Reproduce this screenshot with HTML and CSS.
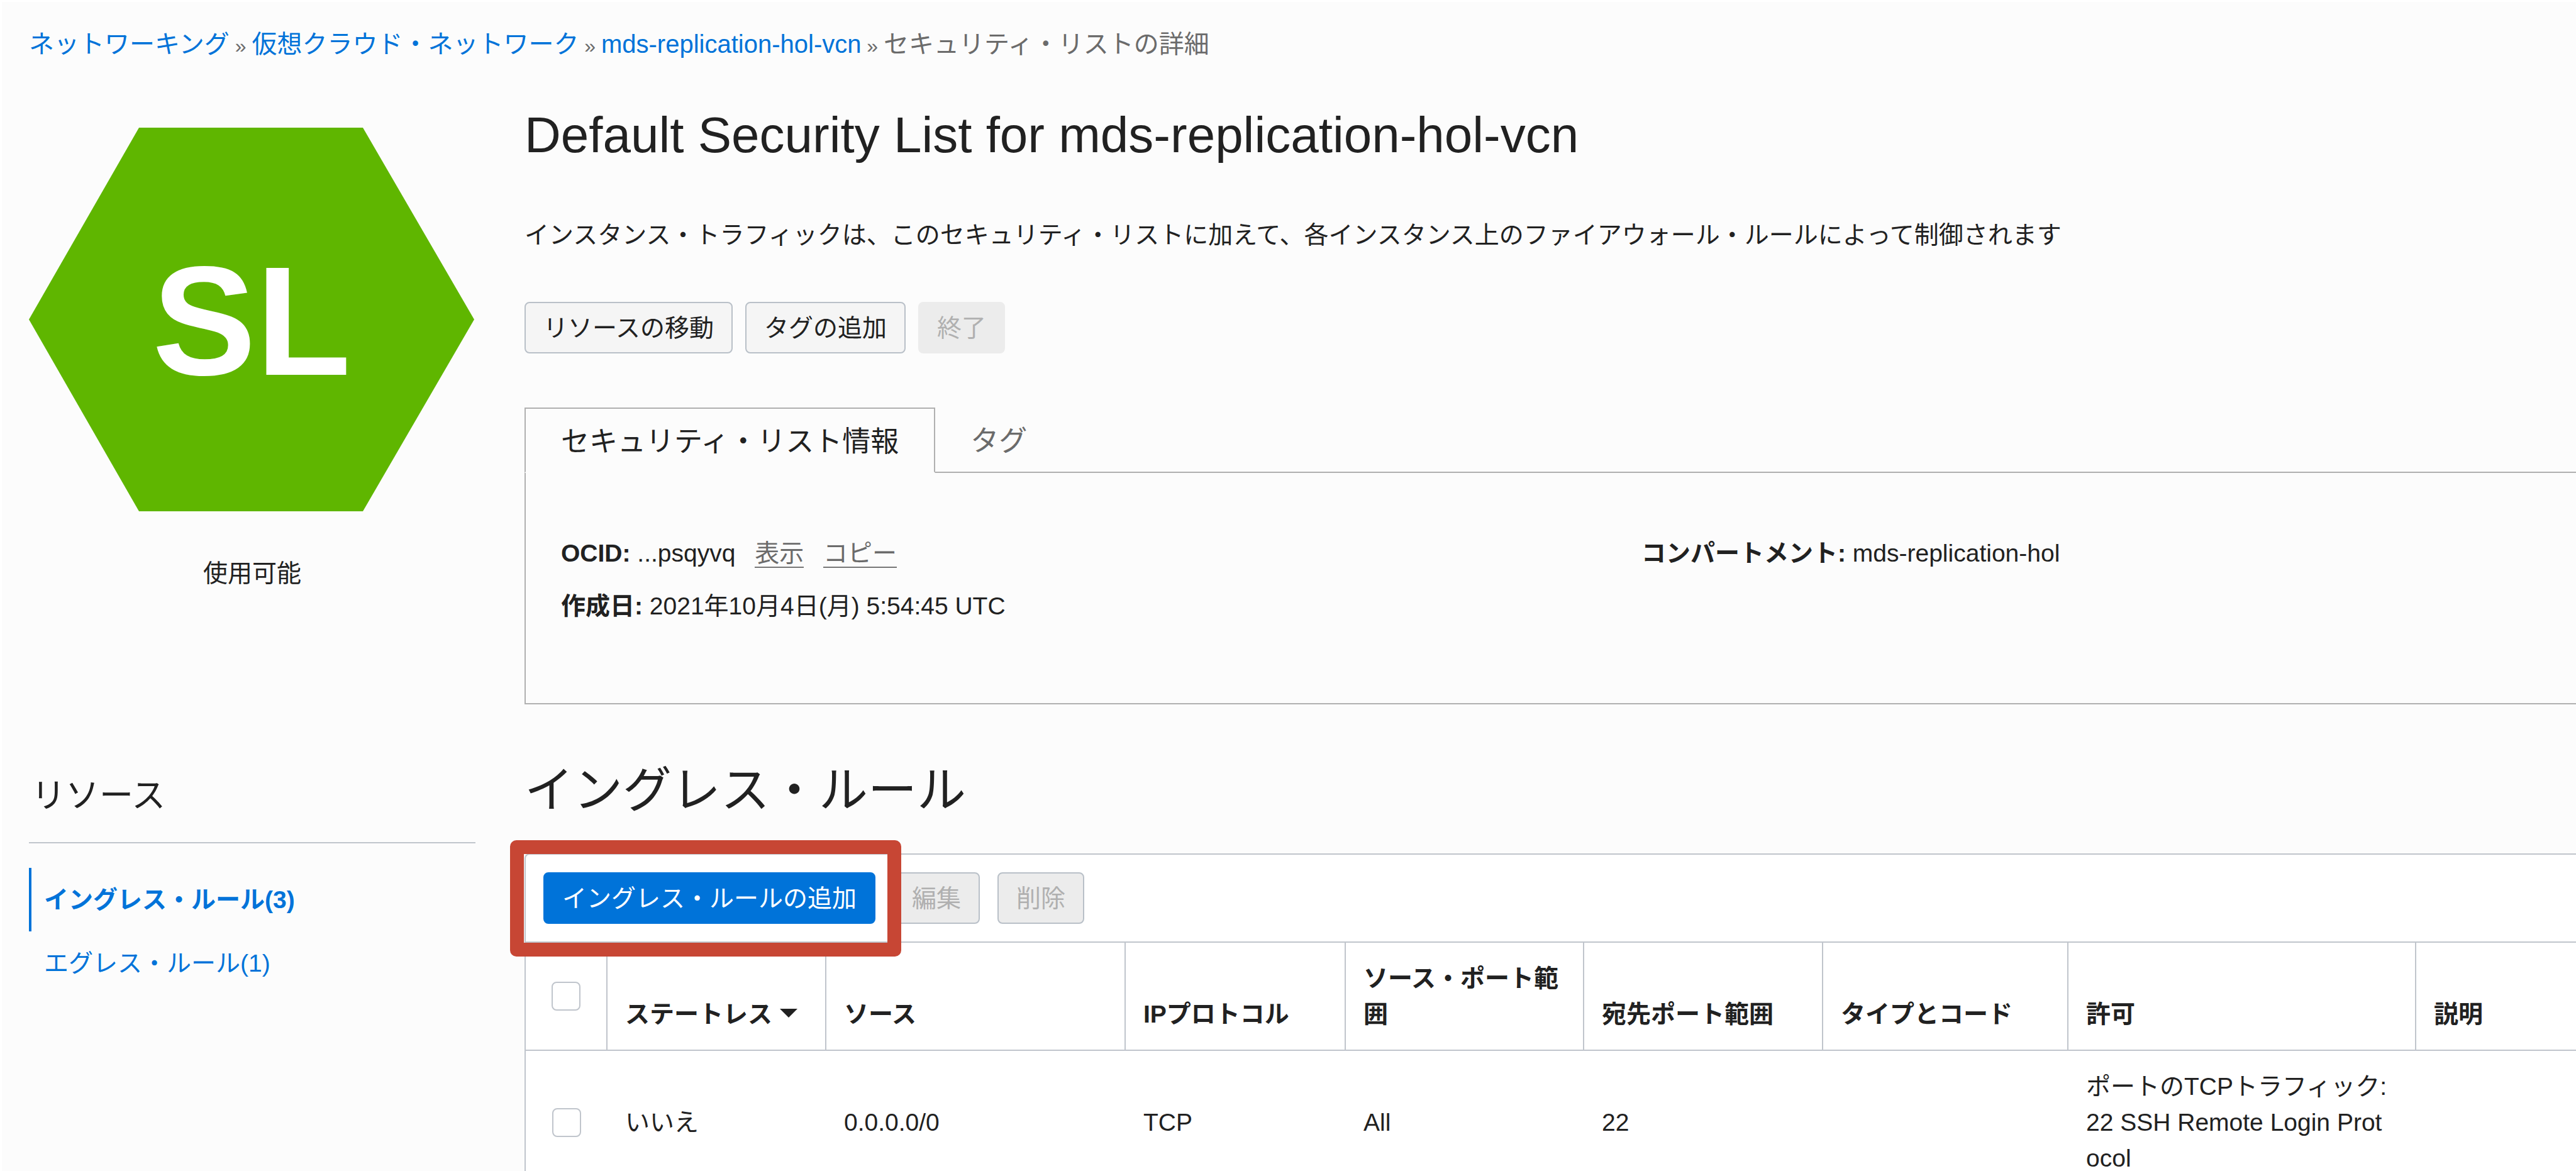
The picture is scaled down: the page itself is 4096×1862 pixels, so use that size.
FILE: index.html
```html
<!DOCTYPE html>
<html lang="ja">
<head>
<meta charset="utf-8">
<title>セキュリティ・リストの詳細</title>
<link rel="stylesheet" href="styles.css">
</head>
<body>
<nav class="breadcrumb" aria-label="パンくずリスト">
  <a href="#">ネットワーキング</a><span class="sep"> » </span><a href="#">仮想クラウド・ネットワーク</a><span class="sep"> » </span><a href="#">mds-replication-hol-vcn</a><span class="sep"> » </span><span>セキュリティ・リストの詳細</span>
</nav>
<div class="layout">
  <aside class="side">
    <div class="status">
      <svg class="hexagon" viewBox="0 0 708 610" role="img" aria-label="SL">
        <polygon points="175,0 531,0 708,305 531,610 175,610 0,305" fill="#5fb600"/>
        <text x="354" y="393" text-anchor="middle" class="hexagon-text">SL</text>
      </svg>
      <p class="status-label">使用可能</p>
    </div>
    <h2 class="side-title">リソース</h2>
    <ul class="side-nav">
      <li><a class="side-link side-link-active" href="#">イングレス・ルール(3)</a></li>
      <li><a class="side-link" href="#">エグレス・ルール(1)</a></li>
    </ul>
  </aside>
  <main class="main">
    <h1 class="title">Default Security List for mds-replication-hol-vcn</h1>
    <p class="description">インスタンス・トラフィックは、このセキュリティ・リストに加えて、各インスタンス上のファイアウォール・ルールによって制御されます</p>
    <div class="actions">
      <button class="btn" type="button">リソースの移動</button>
      <button class="btn" type="button">タグの追加</button>
      <button class="btn btn-flat" type="button" disabled>終了</button>
    </div>
    <div class="tabs" role="tablist">
      <button class="tab tab-active" type="button" role="tab" aria-selected="true">セキュリティ・リスト情報</button>
      <button class="tab" type="button" role="tab" aria-selected="false">タグ</button>
      <div class="tabs-rest"></div>
    </div>
    <section class="info">
      <div class="info-col">
        <p><strong>OCID:</strong> ...psqyvq <a class="copy" href="#">表示</a> <a class="copy" href="#">コピー</a></p>
        <p><strong>作成日:</strong> 2021年10月4日(月) 5:54:45 UTC</p>
      </div>
      <div class="info-col">
        <p><strong>コンパートメント:</strong> mds-replication-hol</p>
      </div>
    </section>
    <h2 class="section-title">イングレス・ルール</h2>
    <section class="panel">
      <div class="toolbar">
        <button class="btn btn-primary" type="button">イングレス・ルールの追加</button>
        <button class="btn" type="button" disabled>編集</button>
        <button class="btn" type="button" disabled>削除</button>
        <div class="highlight"></div>
      </div>
      <table class="rules">
        <colgroup>
          <col class="c-check"><col class="c-stateless"><col class="c-source"><col class="c-proto"><col class="c-sport"><col class="c-dport"><col class="c-type"><col class="c-allow"><col>
        </colgroup>
        <thead>
          <tr>
            <th class="check"><input type="checkbox" aria-label="すべて選択"></th>
            <th>ステートレス<svg class="sort" viewBox="0 0 28 14" aria-hidden="true"><polygon points="0,0 28,0 14,14" fill="#212121"/></svg></th>
            <th>ソース</th>
            <th>IPプロトコル</th>
            <th>ソース・ポート範囲</th>
            <th>宛先ポート範囲</th>
            <th>タイプとコード</th>
            <th>許可</th>
            <th>説明</th>
          </tr>
        </thead>
        <tbody>
          <tr>
            <td class="check"><input type="checkbox" aria-label="ルールを選択"></td>
            <td>いいえ</td>
            <td>0.0.0.0/0</td>
            <td>TCP</td>
            <td>All</td>
            <td>22</td>
            <td></td>
            <td>ポートのTCPトラフィック: 22 SSH Remote Login Protocol</td>
            <td></td>
          </tr>
        </tbody>
      </table>
    </section>
  </main>
</div>
</body>
</html>
```

FILE: styles.css
```css
* {
  box-sizing: border-box;
}

html {
  overflow: hidden;
  background: #fcfcfc;
}

body {
  margin: 0;
  border: solid #ffffff;
  border-width: 3px 0 0 3px;
  background: #fcfcfc;
  color: #212121;
  font-family: "Liberation Sans", "Noto Sans CJK JP", sans-serif;
  font-size: 39px;
  line-height: 57px;
}

h1,
h2,
p,
ul {
  margin: 0;
  padding: 0;
  font-weight: 400;
}

ul {
  list-style: none;
}

a {
  color: #0073d9;
  text-decoration: none;
}

button {
  font: inherit;
  color: inherit;
}

.breadcrumb {
  padding: 39px 43px 0;
  color: #6b6b6b;
  font-size: 40px;
}

.sep {
  font-size: 32px;
}

.layout {
  display: flex;
  align-items: flex-start;
  gap: 78px;
  padding-left: 43px;
}

.side {
  flex: 0 0 710px;
  padding-top: 101px;
}

.status {
  height: 1024px;
}

.hexagon {
  display: block;
  width: 708px;
  height: 610px;
}

.hexagon-text {
  fill: #ffffff;
  font-size: 247px;
  font-weight: 700;
}

.status-label {
  padding-top: 70px;
  text-align: center;
}

.side-title {
  padding: 0 0 36px 4px;
  border-bottom: 2px solid #c0c5cc;
  font-size: 54px;
  line-height: 76px;
}

.side-nav {
  padding-top: 39px;
}

.side-link {
  display: block;
  padding: 22px 20px;
  border-left: 4px solid transparent;
}

.side-link-active {
  border-left-color: #0073d9;
  font-weight: 700;
}

.main {
  flex: 1;
  min-width: 0;
  padding-top: 67px;
}

.title {
  font-size: 80px;
  line-height: 92px;
}

.description {
  padding-top: 84px;
}

.actions {
  display: flex;
  gap: 20px;
  padding-top: 78px;
}

.btn {
  height: 82px;
  padding: 0 28px;
  border: 2px solid #b9c0c8;
  border-radius: 8px;
  background: #f5f5f5;
  white-space: nowrap;
}

.btn:disabled {
  background: #ececec;
  color: #b0b0b0;
}

.btn-flat:disabled {
  border-color: #ececec;
}

.btn-primary {
  border-color: #0073d9;
  background: #0073d9;
  color: #ffffff;
}

.tabs {
  display: flex;
  padding-top: 86px;
}

.tab {
  height: 104px;
  padding: 4px 56px 0;
  border: 0;
  border-bottom: 2px solid #b0b0b0;
  background: none;
  color: #6b6b6b;
  font-size: 45px;
}

.tab-active {
  border: 2px solid #b0b0b0;
  border-bottom-color: transparent;
  color: #212121;
}

.tabs-rest {
  flex: 1;
  border-bottom: 2px solid #b0b0b0;
}

.info {
  display: grid;
  grid-template-columns: 1fr 1fr;
  column-gap: 232px;
  height: 368px;
  padding: 99px 0 0 56px;
  border-left: 2px solid #b0b0b0;
  border-bottom: 2px solid #b0b0b0;
}

.info p {
  margin-bottom: 27px;
}

.copy {
  margin-left: 20px;
  color: #6b6b6b;
  border-bottom: 2px solid #767676;
}

.section-title {
  padding: 85px 0 48px;
  font-size: 78px;
  line-height: 104px;
}

.panel {
  border: 2px solid #c0c5cc;
  border-right: 0;
  border-bottom: 0;
  border-radius: 8px 0 0 0;
  background: #ffffff;
}

.toolbar {
  position: relative;
  display: flex;
  gap: 28px;
  padding: 28px;
}

.highlight {
  position: absolute;
  left: -25px;
  top: -23px;
  width: 622px;
  height: 185px;
  border: 22px solid #c74634;
  border-radius: 10px;
}

.rules {
  width: 100%;
  table-layout: fixed;
  border-collapse: separate;
  border-spacing: 0;
  word-break: break-all;
}

.c-check {
  width: 130px;
}

.c-stateless {
  width: 348px;
}

.c-source {
  width: 476px;
}

.c-proto {
  width: 350px;
}

.c-sport {
  width: 379px;
}

.c-dport {
  width: 380px;
}

.c-type {
  width: 390px;
}

.c-allow {
  width: 553px;
}

.rules th,
.rules td {
  padding: 28px 34px 28px 28px;
  text-align: left;
}

.rules th {
  border-top: 2px solid #c0c5cc;
  border-bottom: 2px solid #c0c5cc;
  border-right: 2px solid #c0c5cc;
  vertical-align: bottom;
}

.rules th:last-child {
  border-right: 0;
}

.rules .check {
  padding: 0;
  text-align: center;
  vertical-align: middle;
}

.check input {
  display: block;
  appearance: none;
  width: 46px;
  height: 46px;
  margin: 0 auto;
  border: 2px solid #c0c5cc;
  border-radius: 8px;
  background: #ffffff;
}

.sort {
  width: 28px;
  height: 14px;
  margin-left: 12px;
  vertical-align: 8px;
}
```
